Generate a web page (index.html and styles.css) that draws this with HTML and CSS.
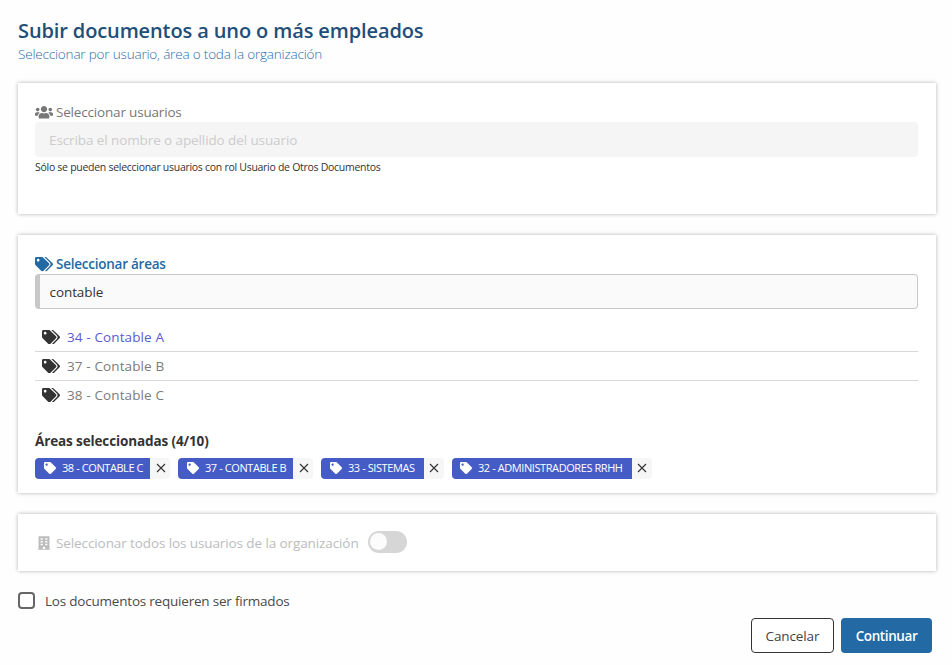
FILE: index.html
```html
<!DOCTYPE html>
<html lang="es">
<head>
<meta charset="utf-8">
<title>Subir documentos</title>
<link rel="stylesheet" href="styles.css">
</head>
<body>
<svg class="defs" width="0" height="0" aria-hidden="true">
  <symbol id="tags" viewBox="0 0 640 512"><path d="M497.941 225.941L286.059 14.059A48 48 0 0 0 252.118 0H48C21.490 0 0 21.490 0 48v204.118a48 48 0 0 0 14.059 33.941l211.882 211.882c18.744 18.745 49.136 18.746 67.882 0l204.118-204.118c18.745-18.745 18.745-49.137 0-67.882zM112 160c-26.510 0-48-21.490-48-48s21.490-48 48-48 48 21.490 48 48-21.490 48-48 48zm513.941 133.823L421.823 497.941c-18.745 18.745-49.137 18.745-67.882 0l-.36-.36L527.640 323.522c16.999-16.999 26.360-39.600 26.360-63.640s-9.362-46.641-26.360-63.640L331.397 0h48.721a48 48 0 0 1 33.941 14.059l211.882 211.882c18.745 18.745 18.745 49.137 0 67.882z"/></symbol>
  <symbol id="tag" viewBox="0 0 512 512"><path d="M0 252.118V48C0 21.490 21.490 0 48 0h204.118a48 48 0 0 1 33.941 14.059l211.882 211.882c18.745 18.745 18.745 49.137 0 67.882L293.823 497.941c-18.745 18.745-49.137 18.745-67.882 0L14.059 286.059A48 48 0 0 1 0 252.118zM112 64c-26.510 0-48 21.490-48 48s21.490 48 48 48 48-21.490 48-48-21.490-48-48-48z"/></symbol>
  <symbol id="users" viewBox="0 0 640 512"><path d="M96 224c35.300 0 64-28.700 64-64s-28.700-64-64-64-64 28.700-64 64 28.700 64 64 64zm448 0c35.300 0 64-28.700 64-64s-28.700-64-64-64-64 28.700-64 64 28.700 64 64 64zm32 32h-64c-17.600 0-33.500 7.100-45.100 18.600 40.300 22.100 68.900 62 75.100 109.400h66c17.700 0 32-14.300 32-32v-32c0-35.300-28.700-64-64-64zm-256 0c61.900 0 112-50.100 112-112S381.900 32 320 32 208 82.100 208 144s50.100 112 112 112zm76.800 32h-8.300c-20.800 10-43.900 16-68.500 16s-47.600-6-68.500-16h-8.300C179.600 288 128 339.600 128 403.200V432c0 26.500 21.500 48 48 48h288c26.500 0 48-21.500 48-48v-28.800c0-63.600-51.600-115.200-115.200-115.200zm-223.700-13.400C161.500 263.100 145.600 256 128 256H64c-35.300 0-64 28.700-64 64v32c0 17.700 14.300 32 32 32h65.900c6.300-47.400 34.900-87.300 75.200-109.400z"/></symbol>
  <symbol id="building" viewBox="0 0 448 512"><path fill-rule="evenodd" d="M0 488v24h448v-36h-20V24a24 24 0 0 0-24-24H44a24 24 0 0 0-24 24v452H0zM96 76h84v60H96zm172 0h84v60h-84zM96 180h84v60H96zm172 0h84v60h-84zM96 284h84v60H96zm172 0h84v60h-84zM180 396h88v84h-88z"/></symbol>
  <symbol id="close" viewBox="0 0 10 10"><path d="M1 1l8 8M9 1L1 9" fill="none" stroke="currentColor" stroke-width="1.1"/></symbol>
</svg>
<main class="page">
  <h1 class="title">Subir documentos a uno o más empleados</h1>
  <p class="subtitle">Seleccionar por usuario, área o toda la organización</p>

  <section class="card users">
    <div class="label muted"><svg class="icon"><use href="#users"/></svg><span>Seleccionar usuarios</span></div>
    <div class="field disabled">Escriba el nombre o apellido del usuario</div>
    <p class="hint">Sólo se pueden seleccionar usuarios con rol Usuario de Otros Documentos</p>
  </section>

  <section class="card areas">
    <div class="label active"><svg class="icon"><use href="#tags"/></svg><span>Seleccionar áreas</span></div>
    <div class="field search">contable</div>
    <ul class="results">
      <li class="current"><svg class="icon"><use href="#tags"/></svg><span>34 - Contable A</span></li>
      <li><svg class="icon"><use href="#tags"/></svg><span>37 - Contable B</span></li>
      <li><svg class="icon"><use href="#tags"/></svg><span>38 - Contable C</span></li>
    </ul>
    <h2 class="selected-title">Áreas seleccionadas (4/10)</h2>
    <div class="chips">
      <div class="chip c1"><span class="chip-name"><svg><use href="#tag"/></svg><span>38 - CONTABLE C</span></span><span class="chip-x"><svg><use href="#close"/></svg></span></div>
      <div class="chip c2"><span class="chip-name"><svg><use href="#tag"/></svg><span>37 - CONTABLE B</span></span><span class="chip-x"><svg><use href="#close"/></svg></span></div>
      <div class="chip c3"><span class="chip-name"><svg><use href="#tag"/></svg><span>33 - SISTEMAS</span></span><span class="chip-x"><svg><use href="#close"/></svg></span></div>
      <div class="chip c4"><span class="chip-name"><svg><use href="#tag"/></svg><span>32 - ADMINISTRADORES RRHH</span></span><span class="chip-x"><svg><use href="#close"/></svg></span></div>
    </div>
  </section>

  <section class="card all">
    <svg class="building"><use href="#building"/></svg>
    <span class="all-text">Seleccionar todos los usuarios de la organización</span>
    <span class="toggle"><span class="knob"></span></span>
  </section>

  <div class="sign"><span class="box"></span><span class="sign-text">Los documentos requieren ser firmados</span></div>
  <div class="actions">
    <button class="btn cancel">Cancelar</button>
    <button class="btn go">Continuar</button>
  </div>
</main>
</body>
</html>
```
FILE: styles.css
```css
* { box-sizing: border-box; }
body { margin: 0; background: #fefefe; color: #333; font: 13.5px/20px "Open Sans", "Noto Sans", sans-serif; white-space: nowrap; }
.defs { position: absolute; }
svg { fill: currentColor; flex: none; display: block; }
h1, h2, p, ul { margin: 0; padding: 0; }
.page { padding: 17px 16px 0 18px; display: flex; flex-direction: column; }
.title { color: #1f4e79; font-size: 20px; line-height: 27px; font-weight: 600; letter-spacing: -.12px; }
.subtitle { color: #2c6ea8; line-height: 20px; font-weight: 300; margin-bottom: 19px; letter-spacing: -.18px; }
.card { width: 918px; background: #fff; box-shadow: 0 0 4px rgba(0,0,0,.3); padding: 20px 18px 0 17px; margin-bottom: 21px; }
.users { height: 131px; }
.areas { height: 258px; }
.all { height: 57px; display: flex; align-items: center; padding: 0 0 0 20px; color: #bcbcbc; }
.label { display: flex; align-items: center; gap: 3px; height: 19px; letter-spacing: -.18px; }
.label span { padding-bottom: 2px; }
.icon { width: 18px; height: 14.4px; }
.muted { color: #777; }
.active { color: #2369a3; font-weight: 600; letter-spacing: -.24px; }
.field { height: 35px; line-height: 35px; border-radius: 4px; padding-left: 14px; }
.disabled { background: #f5f5f5; color: #ccc; line-height: 37px; letter-spacing: -.1px; }
.search { background: #fafafa; border: 1px solid #c8c8c8; border-left-width: 5px; line-height: 34px; padding-left: 9.5px; letter-spacing: -.08px; }
.hint { font-size: 10.5px; line-height: 20px; letter-spacing: -.28px; }
.results { list-style: none; margin-top: 14px; }
.results li { display: flex; align-items: center; height: 29px; padding-left: 7px; gap: 7px; color: #7c7c7c; border-bottom: 1px solid #d8d8d8; letter-spacing: .12px; }
.results li:last-child { border-bottom-color: transparent; }
.results .icon { color: #333; }
.results .current { color: #5b5bd0; }
.selected-title { font-size: 13.5px; line-height: 20px; font-weight: 700; margin-top: 21px; letter-spacing: -.12px; }
.chips { display: flex; margin-top: 7px; gap: 8px; }
.chip { display: flex; height: 21px; }
.chip-name { background: #455cc7; color: #fff; width: 115px; border-radius: 4px 0 0 4px; display: flex; align-items: center; padding: 0 0 1px 9px; gap: 6px; font-size: 11px; font-weight: 500; letter-spacing: -.42px; }
.chip-name svg { width: 12px; height: 12px; }
.c3 .chip-name { width: 103px; }
.c4 .chip-name { width: 180px; padding-left: 8px; }
.chip-x { width: 20px; background: #f6f6f6; border-radius: 0 4px 4px 0; display: flex; align-items: center; padding: 0 0 1px 6px; }
.c3 .chip-x, .c4 .chip-x { padding-left: 5px; }
.chip-x svg { width: 10px; height: 10px; }
.building { width: 12px; height: 14px; margin-right: 6px; }
.all-text { width: 312px; letter-spacing: -.1px; }
.toggle { width: 39px; height: 22px; border-radius: 11px; background: #d6d6d6; padding: 2px; margin-bottom: 2px; }
.knob { display: block; width: 17px; height: 17px; border-radius: 50%; background: #fcfcfc; }
.sign { display: flex; align-items: center; height: 20px; gap: 10px; color: #4a4a4a; margin-top: -1px; letter-spacing: -.21px; }
.box { width: 17px; height: 17px; border: 2px solid #666; border-radius: 4px; margin-bottom: 2px; }
.actions { display: flex; justify-content: flex-end; gap: 7px; padding-right: 4px; margin-top: 7px; }
.btn { height: 35px; border-radius: 4px; font: inherit; padding: 0; }
.cancel { width: 83px; border: 1px solid #333; background: #fff; color: #444; letter-spacing: -.12px; }
.go { width: 91px; border: 0; background: #2369a3; color: #fff; font-weight: 600; letter-spacing: -.4px; }
```
